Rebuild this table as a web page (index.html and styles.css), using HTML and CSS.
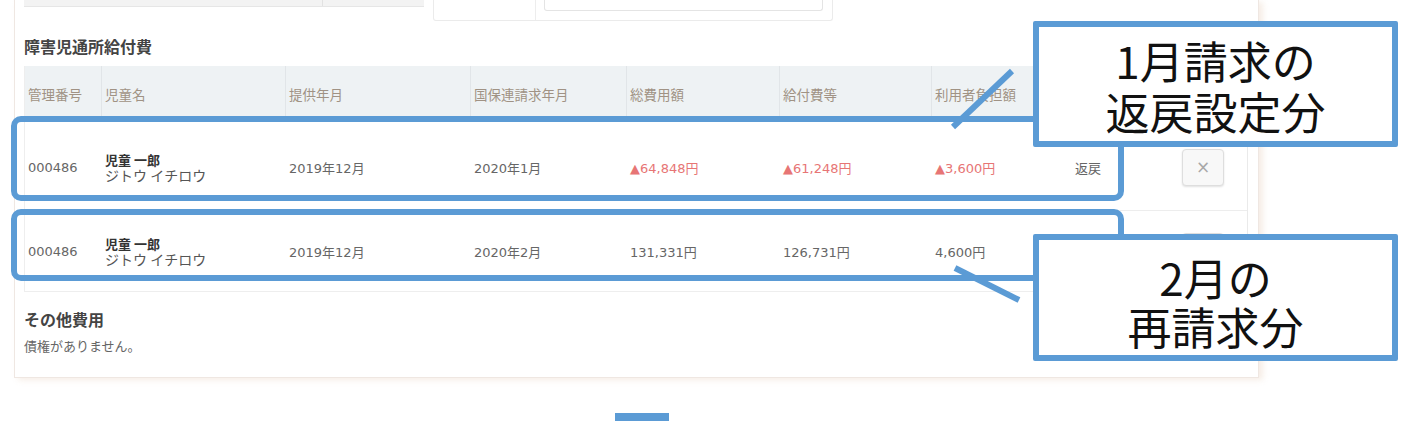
FILE: index.html
```html
<!DOCTYPE html>
<html lang="ja">
<head>
<meta charset="utf-8">
<title>障害児通所給付費</title>
<link rel="stylesheet" href="styles.css">
</head>
<body>
<div class="page">
  <div class="panel">
    <div class="top-row">
      <div class="top-bar"><span class="top-bar-main"></span><span class="top-bar-side"></span></div>
      <div class="top-box"><div class="top-label"></div><div class="top-input"></div></div>
    </div>
    <h2 class="section-title">障害児通所給付費</h2>
    <div class="table">
      <div class="grid thead">
        <div class="th">管理番号</div>
        <div class="th">児童名</div>
        <div class="th">提供年月</div>
        <div class="th">国保連請求年月</div>
        <div class="th">総費用額</div>
        <div class="th">給付費等</div>
        <div class="th">利用者負担額</div>
        <div class="th"></div>
        <div class="th last"></div>
      </div>
      <div class="grid trow first">
        <div class="td">000486</div>
        <div class="td name"><span class="kanji">児童 一郎</span><span class="kana">ジトウ イチロウ</span></div>
        <div class="td">2019年12月</div>
        <div class="td">2020年1月</div>
        <div class="td neg">▲64,848円</div>
        <div class="td neg">▲61,248円</div>
        <div class="td neg">▲3,600円</div>
        <div class="td">返戻</div>
        <div class="td act"><button class="del-btn" type="button">×</button></div>
      </div>
      <div class="grid trow second">
        <div class="td">000486</div>
        <div class="td name"><span class="kanji">児童 一郎</span><span class="kana">ジトウ イチロウ</span></div>
        <div class="td">2019年12月</div>
        <div class="td">2020年2月</div>
        <div class="td">131,331円</div>
        <div class="td">126,731円</div>
        <div class="td">4,600円</div>
        <div class="td"></div>
        <div class="td act"><button class="del-btn" type="button">×</button></div>
      </div>
    </div>
    <h2 class="section-title other">その他費用</h2>
    <p class="empty">債権がありません。</p>
  </div>
  <div class="next-marker"></div>

  <svg class="overlay" width="1403" height="421" viewBox="0 0 1403 421">
    <line x1="953" y1="127" x2="1012" y2="71" class="ol"/>
    <line x1="955" y1="268" x2="1019" y2="300" class="ol"/>
    <rect x="14" y="119" width="1107" height="79" rx="7" class="ol"/>
    <rect x="14" y="212" width="1107" height="66" rx="7" class="ol"/>
  </svg>
  <div class="callout c1">1月請求の<br>返戻設定分</div>
  <div class="callout c2">2月の<br>再請求分</div>
</div>
</body>
</html>
```
FILE: styles.css
```css
* { box-sizing: border-box; }
html, body { margin: 0; padding: 0; background: #fff; }
body {
  font-family: "Noto Sans CJK JP", "Noto Sans", sans-serif;
  color: #555;
}
.page {
  position: relative;
  width: 1403px;
  height: 421px;
  overflow: hidden;
}
.panel {
  margin-left: 14px;
  width: 1245px;
  padding: 0 10px 22px 9px;
  border: 1px solid #efe7e2;
  border-top: none;
  background: #fff;
  box-shadow: 4px 2px 6px rgba(235, 215, 200, 0.45);
}
.top-row {
  display: flex;
  align-items: flex-start;
  height: 21px;
}
.top-bar {
  display: flex;
  width: 400px;
  height: 7px;
  background: #f3f3f3;
  border-bottom: 1px solid #e6e6e6;
}
.top-bar-main { width: 299px; border-right: 1px solid #e2e2e2; }
.top-bar-side { flex: 1; }
.top-box {
  display: flex;
  margin-left: 9px;
  width: 400px;
  height: 21px;
  border: 1px solid #ebebeb;
  border-top: none;
  border-radius: 0 0 3px 3px;
}
.top-label { width: 102px; border-right: 1px solid #ededed; }
.top-input {
  flex: 1;
  height: 11px;
  margin: 0 9px 0 8px;
  border: 1px solid #e4e4e4;
  border-top: none;
  border-radius: 0 0 3px 3px;
}
.section-title {
  margin: 14px 0 9px;
  font-size: 16px;
  line-height: 22px;
  font-weight: 700;
  color: #444;
}
.section-title.other { margin: 16px 0 6px; }
.empty {
  margin: 0;
  font-size: 13px;
  line-height: 19px;
  color: #666;
}
.table {
  border-left: 1px solid #eeeeee;
  border-right: 1px solid #eaeaea;
  border-bottom: 1px solid #eeeeee;
}
.grid {
  display: grid;
  grid-template-columns: 77px 184px 185px 156px 153px 152px 140px 88px 87px;
}
.thead {
  height: 52px;
  background: #eef2f4;
  border-bottom: 2px solid #e9ecee;
}
.th {
  display: flex;
  align-items: center;
  padding: 6px 0 0 3px;
  font-size: 13.5px;
  color: #a09284;
  border-right: 1px solid #e1e5e8;
}
.th.last { border-right: none; }
.trow {
  border-bottom: 1px solid #ededed;
  background: #fff;
}
.trow.first { height: 93px; padding-top: 6px; }
.trow.second { height: 80px; border-bottom: none; }
.td {
  display: flex;
  align-items: center;
  padding-left: 3px;
  font-family: "DejaVu Sans", "Noto Sans CJK JP", sans-serif;
  font-size: 13px;
  color: #666;
}
.td.neg { color: #e77575; }
.td.name {
  flex-direction: column;
  align-items: flex-start;
  justify-content: center;
  padding-top: 1px;
  font-family: "Noto Sans CJK JP", sans-serif;
}
.kanji {
  font-size: 13px;
  line-height: 14px;
  font-weight: 700;
  color: #333;
}
.kana {
  font-size: 14px;
  line-height: 16px;
  color: #555;
}
.td.act { padding-left: 22px; }
.del-btn {
  width: 42px;
  height: 37px;
  padding: 0;
  border: 1px solid #dedede;
  border-radius: 4px;
  background: #f8f8f8;
  box-shadow: 0 1px 2px rgba(0, 0, 0, 0.12);
  color: #a8a8a8;
  font-family: "DejaVu Sans", sans-serif;
  font-size: 17px;
  line-height: 1;
}
.next-marker {
  margin: 35px 0 0 615px;
  width: 54px;
  height: 20px;
  background: #5b9bd5;
}
.overlay {
  position: absolute;
  left: 0;
  top: 0;
  pointer-events: none;
}
.ol {
  fill: none;
  stroke: #5b9bd5;
  stroke-width: 6;
}
.callout {
  position: absolute;
  left: 1033px;
  width: 365px;
  display: flex;
  flex-direction: column;
  justify-content: center;
  align-items: center;
  text-align: center;
  background: #fff;
  border: 6px solid #5b9bd5;
  border-radius: 2px;
  color: #111;
  font-family: "Noto Sans CJK JP", sans-serif;
  font-size: 44px;
  line-height: 51px;
}
.callout.c1 { top: 21px; height: 126px; padding-top: 4px; }
.callout.c2 { top: 234px; height: 127px; padding-top: 8px; line-height: 49px; }
```
